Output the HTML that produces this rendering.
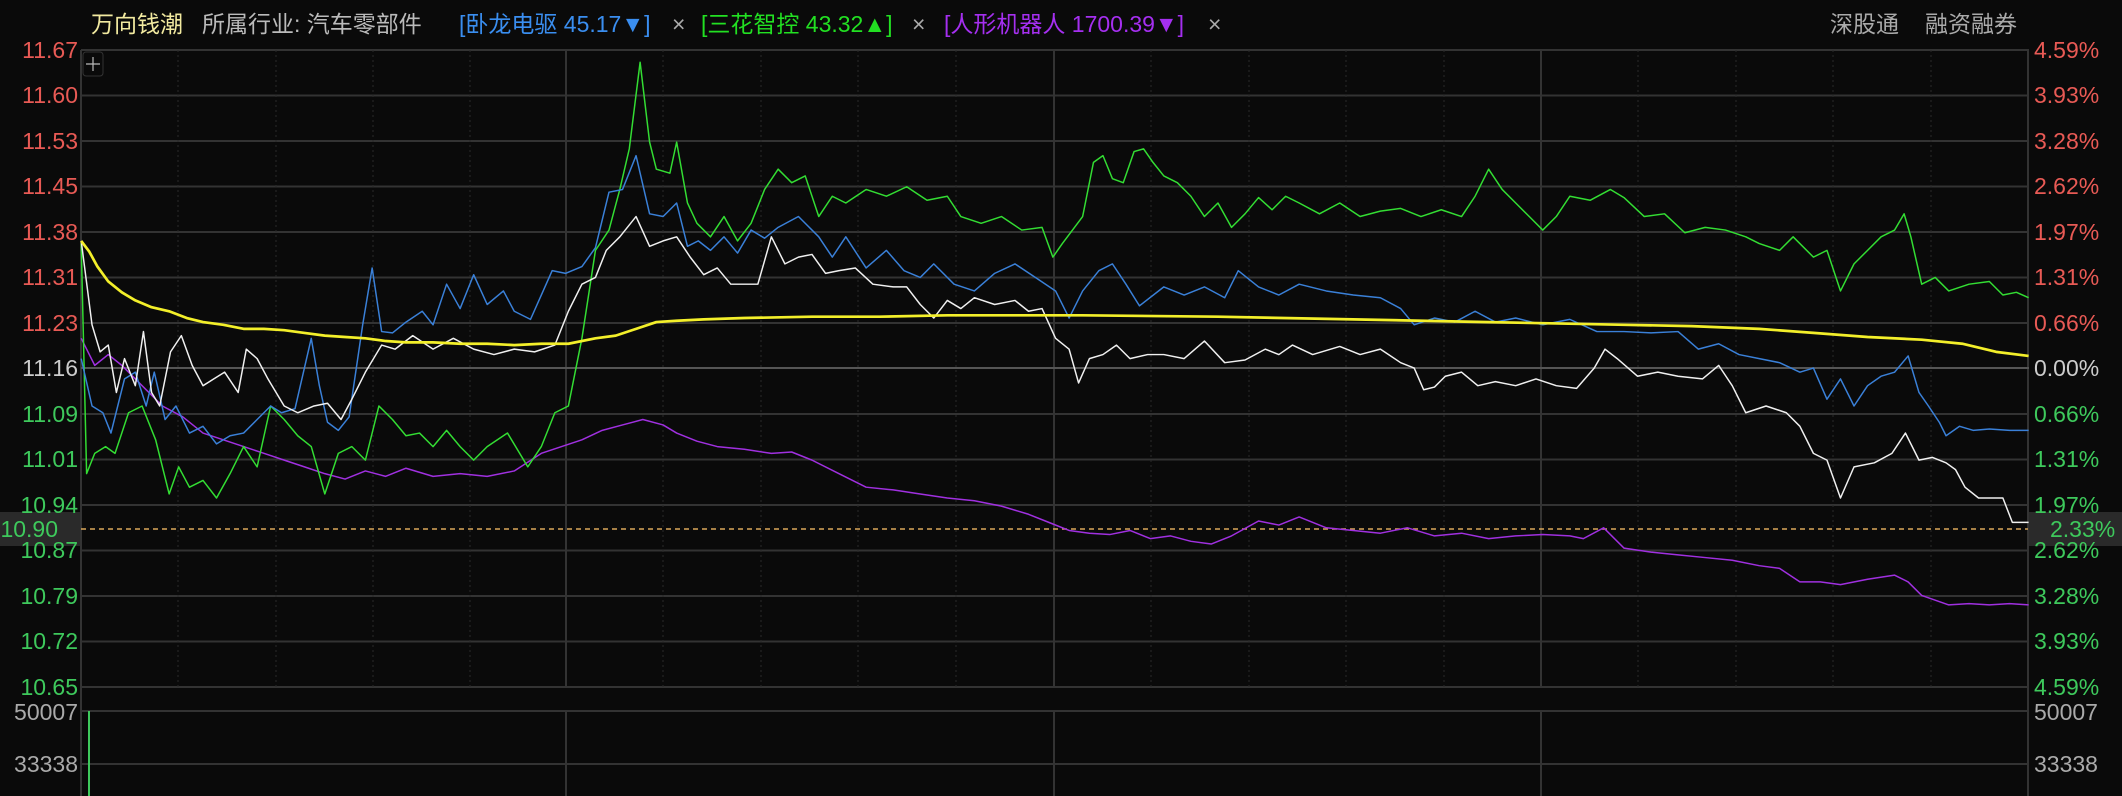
<!DOCTYPE html>
<html><head><meta charset="utf-8"><style>
html,body{margin:0;padding:0;background:#0a0a0a;width:2122px;height:796px;overflow:hidden;font-family:"Liberation Sans","Noto Sans CJK SC",sans-serif}
.t{position:absolute;font-size:23px;line-height:26px;white-space:nowrap}
.l{position:absolute;left:0;width:78px;text-align:right;font-size:23px;line-height:26px}
.r{position:absolute;left:2034px;font-size:23px;line-height:26px}
.red{color:#e85a55}.grn{color:#3ec95c}.gry{color:#aaa}
</style></head><body>
<div class="t" style="left:91px;top:11px;color:#f2eaa0">万向钱潮</div>
<div class="t" style="left:202px;top:11px;color:#bbb">所属行业: 汽车零部件</div>
<div class="t" style="left:459px;top:11px;color:#3a8ef0">[卧龙电驱 45.17▼]</div>
<div class="t" style="left:672px;top:11px;color:#aaa">×</div>
<div class="t" style="left:701px;top:11px;color:#22e022">[三花智控 43.32▲]</div>
<div class="t" style="left:912px;top:11px;color:#aaa">×</div>
<div class="t" style="left:944px;top:11px;color:#a52ff0">[人形机器人 1700.39▼]</div>
<div class="t" style="left:1208px;top:11px;color:#aaa">×</div>
<div class="t" style="left:1830px;top:11px;color:#aaa">深股通</div>
<div class="t" style="left:1925px;top:11px;color:#aaa">融资融券</div>
<svg style="position:absolute;left:0;top:0" width="2122" height="796">
<g stroke="#333" stroke-width="2">
<line x1="81" y1="50" x2="2029" y2="50"/><line x1="81" y1="95.5" x2="2029" y2="95.5"/><line x1="81" y1="141" x2="2029" y2="141"/><line x1="81" y1="186.5" x2="2029" y2="186.5"/><line x1="81" y1="232" x2="2029" y2="232"/><line x1="81" y1="277.5" x2="2029" y2="277.5"/><line x1="81" y1="323" x2="2029" y2="323"/>
<line x1="81" y1="414" x2="2029" y2="414"/><line x1="81" y1="459.5" x2="2029" y2="459.5"/><line x1="81" y1="505" x2="2029" y2="505"/><line x1="81" y1="550.5" x2="2029" y2="550.5"/><line x1="81" y1="596" x2="2029" y2="596"/><line x1="81" y1="641.5" x2="2029" y2="641.5"/><line x1="81" y1="687" x2="2029" y2="687"/>
<line x1="81" y1="711" x2="2029" y2="711"/><line x1="81" y1="764" x2="2029" y2="764"/>
<line x1="81" y1="50" x2="81" y2="796"/><line x1="2028" y1="50" x2="2028" y2="796"/>
<line x1="566" y1="50" x2="566" y2="687"/><line x1="1054" y1="50" x2="1054" y2="687"/><line x1="1541" y1="50" x2="1541" y2="687"/>
<line x1="566" y1="711" x2="566" y2="796"/><line x1="1054" y1="711" x2="1054" y2="796"/><line x1="1541" y1="711" x2="1541" y2="796"/>
</g>
<line x1="81" y1="368" x2="2029" y2="368" stroke="#555" stroke-width="2"/>
<g stroke="#2a2a2a" stroke-width="1" stroke-dasharray="2,3">
<line x1="178" y1="50" x2="178" y2="687"/><line x1="276" y1="50" x2="276" y2="687"/><line x1="373" y1="50" x2="373" y2="687"/><line x1="470" y1="50" x2="470" y2="687"/>
<line x1="663" y1="50" x2="663" y2="687"/><line x1="761" y1="50" x2="761" y2="687"/><line x1="858" y1="50" x2="858" y2="687"/><line x1="956" y1="50" x2="956" y2="687"/>
<line x1="1151" y1="50" x2="1151" y2="687"/><line x1="1249" y1="50" x2="1249" y2="687"/><line x1="1346" y1="50" x2="1346" y2="687"/><line x1="1444" y1="50" x2="1444" y2="687"/>
<line x1="1638" y1="50" x2="1638" y2="687"/><line x1="1736" y1="50" x2="1736" y2="687"/><line x1="1833" y1="50" x2="1833" y2="687"/><line x1="1931" y1="50" x2="1931" y2="687"/>
</g>
<line x1="81" y1="529" x2="2028" y2="529" stroke="#d9a85a" stroke-width="1.5" stroke-dasharray="5,4"/>
<rect x="83" y="52" width="20" height="24" rx="3" fill="none" stroke="#333"/>
<path d="M93 57v14M86 64h14" stroke="#bbb" stroke-width="1.2"/>
<line x1="89" y1="711" x2="89" y2="796" stroke="#3ec95c" stroke-width="2"/>
<g fill="none" stroke-linejoin="round" transform="scale(1.3533)">
<polyline stroke="#a030e0" stroke-width="1.1" points="60,250 70,270 80,262 90,270 100,280 110,290 120,300 135,308 150,320 165,325 180,330 195,335 210,340 225,345 240,350 255,354 270,348 285,352 300,346 320,352 340,350 360,352 380,348 400,335 415,330 430,325 445,318 460,314 475,310 490,314 500,320 515,326 530,330 550,332 570,335 585,334 600,340 620,350 640,360 660,362 680,365 700,368 720,370 740,374 760,380 775,386 790,392 805,394 820,395 835,392 850,398 865,396 880,400 895,402 910,396 930,385 945,388 960,382 980,390 1000,392 1020,394 1040,390 1060,396 1080,394 1100,398 1120,396 1140,395 1160,396 1170,398 1185,390 1200,405 1220,408 1240,410 1260,412 1280,414 1300,418 1315,420 1330,430 1345,430 1360,432 1380,428 1400,425 1410,430 1420,440 1440,447 1455,446 1470,447 1485,446 1499,447"/>
<polyline stroke="#33dd33" stroke-width="1.1" points="60,180 64,350 70,335 78,330 85,335 95,305 105,300 115,325 125,365 132,345 140,360 150,355 160,368 170,350 180,330 190,345 200,300 210,310 220,322 230,330 240,365 250,335 260,330 270,340 280,300 290,310 300,322 310,320 320,330 330,318 340,330 350,340 360,330 375,320 390,345 400,330 410,305 420,300 430,250 440,185 450,170 458,140 465,110 473,46 480,105 485,125 495,128 500,105 508,150 515,165 525,175 535,160 545,178 555,165 565,140 575,125 585,135 595,130 605,160 615,145 625,150 640,140 655,145 670,138 685,148 700,145 710,160 725,165 740,160 755,170 770,168 778,190 785,180 800,160 808,120 815,115 822,132 830,135 838,112 845,110 852,120 860,130 870,135 880,145 890,160 900,150 910,168 920,158 930,146 940,155 950,145 960,150 975,158 990,150 1005,160 1020,156 1035,154 1050,160 1065,155 1080,160 1090,145 1100,125 1110,140 1120,150 1130,160 1140,170 1150,160 1160,145 1175,148 1190,140 1200,146 1215,160 1230,158 1245,172 1260,168 1275,170 1290,175 1300,180 1315,185 1325,175 1340,190 1350,185 1360,215 1370,195 1380,185 1390,175 1400,170 1407,158 1412,175 1420,210 1430,205 1440,215 1455,210 1470,208 1480,218 1490,216 1499,220"/>
<polyline stroke="#3a80d8" stroke-width="1.1" points="60,265 68,300 76,305 82,320 92,280 100,275 108,300 114,275 122,310 130,300 140,320 150,315 160,328 170,322 180,320 190,310 200,300 208,305 218,302 230,250 236,285 242,312 250,318 258,308 268,240 275,198 282,245 290,246 300,238 312,230 320,240 330,210 340,228 350,203 360,225 372,215 380,230 392,236 400,218 408,200 418,202 430,197 440,183 450,142 460,140 470,115 480,158 490,160 500,150 508,182 516,178 525,185 535,175 545,187 555,170 565,176 575,168 590,160 605,175 615,190 625,175 640,198 655,185 668,200 680,205 690,195 705,210 720,215 735,202 750,195 765,205 780,215 790,235 800,215 812,200 822,195 832,210 842,226 860,212 875,218 890,212 905,220 915,200 930,212 945,218 960,210 980,215 1000,218 1020,220 1035,228 1045,240 1060,235 1075,238 1090,230 1105,238 1120,235 1140,240 1160,236 1180,245 1200,245 1220,246 1240,245 1255,258 1270,254 1285,262 1300,265 1315,268 1330,275 1340,272 1350,295 1360,280 1370,300 1380,285 1390,278 1400,275 1410,263 1418,290 1425,300 1433,312 1438,322 1448,315 1458,318 1470,317 1485,318 1499,318"/>
<polyline stroke="#f0f0f0" stroke-width="1.1" points="60,178 68,240 74,260 80,255 86,290 92,265 100,285 106,245 112,290 118,300 126,260 134,248 142,270 150,285 158,280 166,275 176,290 182,258 190,265 198,280 210,300 220,305 232,300 242,298 252,310 260,295 270,275 282,255 292,258 305,248 320,258 335,250 350,258 365,262 380,258 395,260 410,255 420,230 430,210 440,205 448,185 458,175 470,160 480,182 490,178 500,175 510,190 520,203 530,198 540,210 550,210 560,210 570,175 580,195 590,190 600,188 610,202 620,200 632,198 645,210 660,212 670,212 680,225 690,235 700,222 710,228 720,220 735,225 750,222 760,230 770,228 780,250 790,258 797,283 805,265 815,262 825,255 835,265 848,262 860,262 875,265 890,252 905,268 920,266 935,258 945,262 955,255 970,262 990,256 1005,262 1020,258 1035,268 1045,272 1052,288 1060,286 1068,278 1080,275 1092,285 1105,282 1120,285 1135,280 1150,285 1165,287 1178,272 1186,258 1195,265 1210,278 1225,275 1240,278 1258,280 1270,270 1280,285 1290,305 1305,300 1320,305 1330,315 1340,335 1350,340 1360,368 1370,345 1385,342 1398,335 1408,320 1418,340 1428,338 1438,342 1445,347 1452,360 1462,368 1470,368 1480,368 1487,386 1499,386"/>
<polyline stroke="#f3ef2a" stroke-width="2" points="60,178 66,186 72,197 80,208 90,216 100,222 112,227 125,230 138,235 150,238 165,240 180,243 195,243 210,244 225,246 240,248 255,249 270,250 285,252 300,253 320,253 340,254 360,254 380,255 400,254 420,254 440,250 455,248 470,243 485,238 500,237 520,236 550,235 600,234 650,234 700,233 800,233 900,234 1000,236 1100,238 1150,239 1200,240 1250,241 1300,243 1340,246 1380,249 1420,251 1450,254 1475,260 1499,263"/>
</g>
<rect x="0" y="512" width="80" height="34" fill="#2a2a2a"/>
<rect x="2029" y="512" width="93" height="34" fill="#2a2a2a"/>
</svg>
<div class="l red" style="top:37px">11.67</div>
<div class="l red" style="top:82px">11.60</div>
<div class="l red" style="top:128px">11.53</div>
<div class="l red" style="top:173px">11.45</div>
<div class="l red" style="top:219px">11.38</div>
<div class="l red" style="top:264px">11.31</div>
<div class="l red" style="top:310px">11.23</div>
<div class="l gry" style="top:355px;color:#ccc">11.16</div>
<div class="l grn" style="top:401px">11.09</div>
<div class="l grn" style="top:446px">11.01</div>
<div class="l grn" style="top:492px">10.94</div>
<div class="l grn" style="top:537px">10.87</div>
<div class="l grn" style="top:583px">10.79</div>
<div class="l grn" style="top:628px">10.72</div>
<div class="l grn" style="top:674px">10.65</div>
<div class="l grn" style="top:516px;left:-2px;width:60px;background:#2a2a2a">10.90</div>
<div class="l gry" style="top:699px">50007</div>
<div class="l gry" style="top:751px">33338</div>
<div class="r red" style="top:37px">4.59%</div>
<div class="r red" style="top:82px">3.93%</div>
<div class="r red" style="top:128px">3.28%</div>
<div class="r red" style="top:173px">2.62%</div>
<div class="r red" style="top:219px">1.97%</div>
<div class="r red" style="top:264px">1.31%</div>
<div class="r red" style="top:310px">0.66%</div>
<div class="r" style="top:355px;color:#ccc">0.00%</div>
<div class="r grn" style="top:401px">0.66%</div>
<div class="r grn" style="top:446px">1.31%</div>
<div class="r grn" style="top:492px">1.97%</div>
<div class="r grn" style="top:537px">2.62%</div>
<div class="r grn" style="top:583px">3.28%</div>
<div class="r grn" style="top:628px">3.93%</div>
<div class="r grn" style="top:674px">4.59%</div>
<div class="r grn" style="top:516px;left:2050px;background:#2a2a2a">2.33%</div>
<div class="r gry" style="top:699px">50007</div>
<div class="r gry" style="top:751px">33338</div>
</body></html>
